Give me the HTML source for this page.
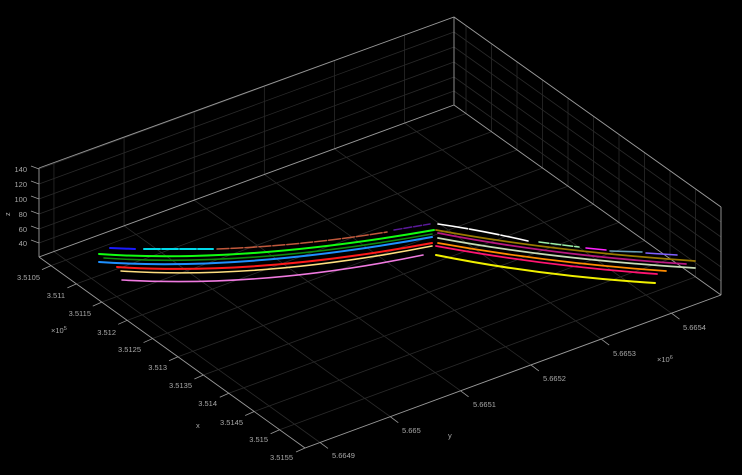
<!DOCTYPE html>
<html><head><meta charset="utf-8"><style>
html,body{margin:0;padding:0;background:#000;width:742px;height:475px;overflow:hidden}
svg{display:block}
text{font-family:"Liberation Sans",sans-serif;font-size:7.5px;fill:#a8a8a8}
</style></head><body>
<svg id="s" width="742" height="475" viewBox="0 0 742 475" xmlns="http://www.w3.org/2000/svg">
<rect width="742" height="475" fill="#000"/>
<g id="grid" stroke="#2a2a2a" stroke-width="0.8" fill="none"></g>
<g id="box" stroke="#9a9a9a" stroke-width="0.9" fill="none">
<path d="M39,168 L454,17 L721,207 M454,17 L454,105 M39,257 L454,105 L721,295 M721,207 L721,295 M39,168 L39,257 M39,257 L305,448 L721,295"/>
</g>
<g id="ticks" stroke="#9a9a9a" stroke-width="0.8"></g>
<g fill="none" stroke-width="2" stroke-linecap="round">
<path d="M110,248 L135,249" stroke="#1a1aff"/>
<path d="M144,249 L213,249" stroke="#00d8e8" stroke-dasharray="16,2"/>
<path d="M217,249 Q300,246 387,232" stroke="#c0583c" stroke-dasharray="12,2" stroke-width="1.5"/>
<path d="M394,230 L430,224" stroke="#5a1a9a" stroke-dasharray="8,2" stroke-width="1.5"/>
<path d="M99,254 Q240,264 434,230" stroke="#11ff11"/>
<path d="M104,258 Q245,268 432,234" stroke="#0e8a0e" stroke-width="1.6"/>
<path d="M99,262 Q240,272 432,237" stroke="#1e90ff"/>
<path d="M117,267 Q255,276 432,243" stroke="#ff1a1a"/>
<path d="M121,271 Q260,280 432,246" stroke="#ffdf80" stroke-width="1.6"/>
<path d="M122,280 Q265,288 423,255" stroke="#f07ae0" stroke-width="1.6"/>
<path d="M438,224 Q480,230 528,241" stroke="#ffffff" stroke-dasharray="30,2" stroke-width="1.6"/>
<path d="M539,242 L579,247" stroke="#9cf0a8" stroke-dasharray="10,2" stroke-width="1.5"/>
<path d="M586,248 L606,250" stroke="#ff22ff" stroke-width="1.5"/>
<path d="M610,251 L642,252" stroke="#6aa0b8" stroke-width="1.5"/>
<path d="M646,253 L677,255" stroke="#8060ff" stroke-width="1.6"/>
<path d="M436,230 Q550,251 695,261" stroke="#9a7a00" stroke-width="1.8"/>
<path d="M438,233 Q550,255 686,264" stroke="#b81880" stroke-width="1.8"/>
<path d="M438,238 Q550,259 695,268" stroke="#c8dcb8" stroke-width="1.8"/>
<path d="M438,243 Q550,263 666,271" stroke="#ff8c00" stroke-width="1.8"/>
<path d="M436,246 Q545,266 657,274" stroke="#ff1470" stroke-width="1.8"/>
<path d="M436,255 Q540,276 655,283" stroke="#f0f000" stroke-width="2"/>
</g>
<g text-anchor="end">
<text x="27" y="172">140</text>
<text x="27" y="187">120</text>
<text x="27" y="202">100</text>
<text x="27" y="217">80</text>
<text x="27" y="232">60</text>
<text x="27" y="246">40</text>
<text x="40" y="280">3.5105</text>
<text x="65" y="298">3.511</text>
<text x="91" y="316">3.5115</text>
<text x="116" y="335">3.512</text>
<text x="141" y="352">3.5125</text>
<text x="167" y="370">3.513</text>
<text x="192" y="388">3.5135</text>
<text x="217" y="406">3.514</text>
<text x="243" y="425">3.5145</text>
<text x="268" y="442">3.515</text>
<text x="293" y="460">3.5155</text>
</g>
<text x="332" y="458">5.6649</text>
<text x="402" y="433">5.665</text>
<text x="473" y="407">5.6651</text>
<text x="543" y="381">5.6652</text>
<text x="613" y="356">5.6653</text>
<text x="683" y="330">5.6654</text>
<text x="196" y="428">x</text>
<text x="448" y="438">y</text>
<text x="0" y="0" transform="translate(10,216) rotate(-90)">z</text>
<text x="51" y="333">×10<tspan dy="-3" font-size="5.5">5</tspan></text>
<text x="657" y="362">×10<tspan dy="-3" font-size="5.5">6</tspan></text>
</svg>
<script>
var ns="http://www.w3.org/2000/svg",g=document.getElementById("grid"),tk=document.getElementById("ticks");
function L(p,x1,y1,x2,y2){var l=document.createElementNS(ns,"line");l.setAttribute("x1",x1);l.setAttribute("y1",y1);l.setAttribute("x2",x2);l.setAttribute("y2",y2);p.appendChild(l);}
for(var k=0;k<6;k++){var t=0.036+0.169*k;
 L(g,39+415*t,257-152*t,305+416*t,448-153*t);
 L(g,39+415*t,257-152*t,39+415*t,168-151*t);
 var fx=305+416*t,fy=448-153*t;L(tk,fx,fy,fx+8,fy+6);}
for(var k=0;k<11;k++){var s=0.045+0.0955*k;
 L(g,39+266*s,257+191*s,454+267*s,105+190*s);
 L(g,454+267*s,105+190*s,454+267*s,17+190*s);
 var ax=39+266*s,ay=257+191*s;L(tk,ax,ay,ax-9,ay+4);}
var ds=[14,28,43,58,73,88];
for(var i=0;i<6;i++){var d=ds[i];L(g,39,257-d,454,105-d);L(g,454,105-d,721,295-d);L(tk,39,257-d,31,254-d);}
</script>
</body></html>
